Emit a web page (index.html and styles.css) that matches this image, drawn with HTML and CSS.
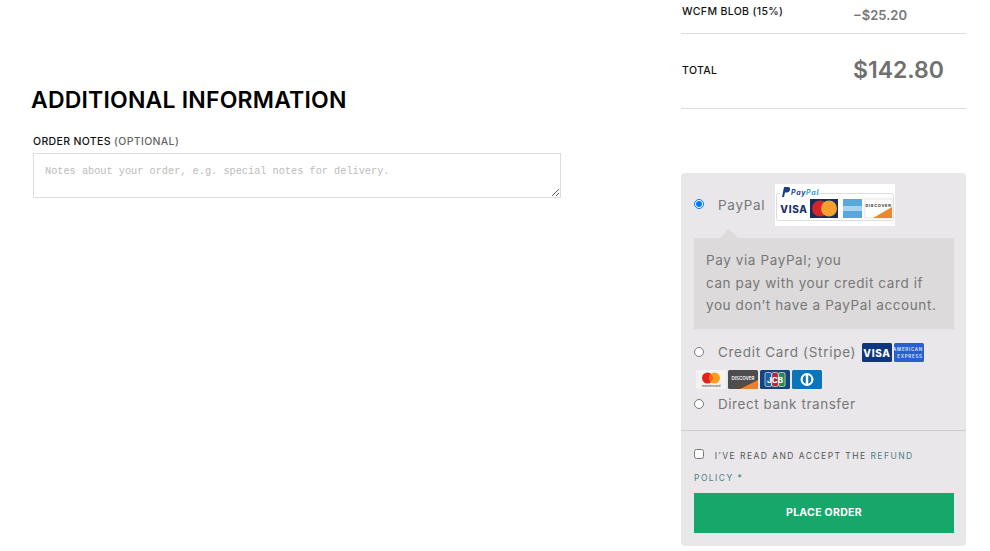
FILE: index.html
```html
<!DOCTYPE html>
<html lang="en">
<head>
    <meta charset="UTF-8">
    <meta name="viewport" content="width=device-width, initial-scale=1.0">
    <title>Checkout</title>
    <link rel="stylesheet" href="styles.css">
</head>
<body>

<div class="checkout">
    <div class="details">
        <h3>ADDITIONAL INFORMATION</h3>
        <label class="notes-label" for="notes">ORDER NOTES <span>(OPTIONAL)</span></label>
        <textarea id="notes" class="notes" placeholder="Notes about your order, e.g. special notes for delivery."></textarea>
    </div>

    <div class="review">
        <div class="row row-tax">
            <span class="row-name">WCFM BLOB (15%)</span>
            <span class="row-value">−$25.20</span>
        </div>
        <div class="row row-total">
            <span class="row-name">TOTAL</span>
            <span class="total-value">$142.80</span>
        </div>

        <div class="payment">
            <div class="method method-paypal">
                <input type="radio" name="pay" id="pay-paypal" checked>
                <label for="pay-paypal">PayPal</label>
                <svg class="paypal-mark" width="120" height="42" viewBox="0 0 120 42">
                    <rect width="120" height="42" fill="#fff"/>
                    <rect x="1.500" y="9.500" width="117" height="27" rx="2" fill="#fff" stroke="#ddd"/>
                    <rect x="5" y="3" width="38" height="11" fill="#fff"/>
                    <path d="M7 13 9 3h4c2 0 2.500 1.500 2 3-.5 2-2 2.500-4 2.500h-1L9 13z" fill="#1a3f8f"/>
                    <text x="16" y="10.500" class="pp-word">Pay<tspan fill="#2a9fdc">Pal</tspan></text>
                    <text x="19" y="29" class="pp-visa">VISA</text>
                    <rect x="35" y="15" width="28" height="19" fill="#1b2a5c"/>
                    <circle cx="45" cy="24.500" r="8" fill="#d3252a"/>
                    <circle cx="54" cy="24.500" r="8" fill="#f3a02c"/>
                    <rect x="68" y="15" width="19" height="19" fill="#5aa7dc"/>
                    <rect x="68" y="22" width="19" height="5" fill="#a9d3ee"/>
                    <rect x="90" y="15" width="27" height="19" fill="#fff" stroke="#e3e3e3"/>
                    <path d="M117 23v11H98z" fill="#ea8a2e"/>
                    <text x="103.500" y="22.500" class="pp-disc">DISCOVER</text>
                </svg>
            </div>
            <div class="method-box">
                Pay via PayPal; you<br>
                can pay with your credit card if<br>
                you don’t have a PayPal account.
            </div>

            <div class="method method-card">
                <input type="radio" name="pay" id="pay-card">
                <label for="pay-card">Credit Card (Stripe)</label>
                <svg class="card card-first" width="30" height="19" viewBox="0 0 30 19">
                    <rect width="30" height="19" rx="1.500" fill="#10357f"/>
                    <text x="15" y="13.500" class="card-visa">VISA</text>
                </svg>
                <svg class="card" width="30" height="19" viewBox="0 0 30 19">
                    <rect width="30" height="19" rx="1.500" fill="#2a5fd0"/>
                    <text x="14" y="8" class="card-amex">AMERICAN</text>
                    <text x="16" y="15" class="card-amex">EXPRESS</text>
                </svg>
            </div>
            <div class="card-row">
                <svg class="card" width="30" height="19" viewBox="0 0 30 19">
                    <rect width="30" height="19" rx="1.500" fill="#f4f2f1"/>
                    <circle cx="11.500" cy="8" r="5.500" fill="#e2231a"/>
                    <circle cx="18.500" cy="8" r="5.500" fill="#f79e1b"/>
                    <path d="M15 3.800a5.500 5.500 0 0 1 0 8.400 5.500 5.500 0 0 1 0-8.400z" fill="#f0641e"/>
                    <text x="15" y="17" class="card-mc">mastercard</text>
                </svg>
                <svg class="card" width="30" height="19" viewBox="0 0 30 19">
                    <rect width="30" height="19" rx="1.500" fill="#4d4d4f"/>
                    <path d="M30 10v7.500a1.500 1.500 0 0 1-1.500 1.500H12z" fill="#e9812e"/>
                    <text x="15" y="9.500" class="card-disc">DISCOVER</text>
                </svg>
                <svg class="card" width="30" height="19" viewBox="0 0 30 19">
                    <rect width="30" height="19" rx="1.500" fill="#13447f"/>
                    <rect x="5" y="2.500" width="6.500" height="14" rx="1.500" fill="#1c5fa8" stroke="#fff" stroke-width=".6"/>
                    <rect x="11.800" y="2.500" width="6.500" height="14" rx="1.500" fill="#b5283c" stroke="#fff" stroke-width=".6"/>
                    <rect x="18.600" y="2.500" width="6.500" height="14" rx="1.500" fill="#2b8a4a" stroke="#fff" stroke-width=".6"/>
                    <text x="15" y="12.500" class="card-jcb">JCB</text>
                </svg>
                <svg class="card" width="30" height="19" viewBox="0 0 30 19">
                    <rect width="30" height="19" rx="1.500" fill="#0a75b8"/>
                    <circle cx="15" cy="9.500" r="6.500" fill="#fff"/>
                    <path d="M13.800 5.300a4.400 4.400 0 0 0 0 8.400zM16.200 5.300v8.400a4.400 4.400 0 0 0 0-8.400z" fill="#0a75b8"/>
                </svg>
            </div>
            <div class="method method-bank">
                <input type="radio" name="pay" id="pay-bank">
                <label for="pay-bank">Direct bank transfer</label>
            </div>

            <div class="place">
                <div class="terms">
                    <input type="checkbox" id="terms">
                    <label for="terms">I’VE READ AND ACCEPT THE <a href="#">REFUND</a> <a href="#">POLICY</a> <a href="#">*</a></label>
                </div>
                <button class="btn">PLACE ORDER</button>
            </div>
        </div>
    </div>
</div>

</body>
</html>
```

FILE: styles.css
```css
body {
    font-family: "Inter", "Liberation Sans", sans-serif;
    margin: 0;
    background: #fff;
    overflow: hidden;
}
.checkout {
    display: grid;
    grid-template-columns: 681px 285px;
    height: 551px;
}
.details {
    padding: 85px 120px 0 33px;
}
h3 {
    margin: 0 0 0 -2px;
    font-size: 23px;
    line-height: 30px;
    font-weight: 600;
    letter-spacing: 0.2px;
    color: #000;
    white-space: nowrap;
}
.notes-label {
    display: block;
    margin-top: 15px;
    font-size: 10.500px;
    line-height: 23px;
    font-weight: 500;
    letter-spacing: 0.35px;
    color: #111;
}
.notes-label span {
    color: #666;
}
.notes {
    display: block;
    box-sizing: border-box;
    width: 528px;
    height: 45px;
    margin: 0;
    padding: 9px 11px;
    border: 1px solid #ddd;
    font-family: "Liberation Mono", monospace;
    font-size: 10.250px;
    line-height: 16px;
}
.notes::placeholder {
    color: #bbb;
}
.row {
    display: flex;
    box-sizing: border-box;
    border-bottom: 1px solid #ddd;
}
.row-tax {
    height: 34px;
}
.row-total {
    height: 75px;
    padding-bottom: 2px;
    align-items: center;
}
.row-name {
    width: 171px;
    padding-left: 1px;
    font-size: 10.500px;
    font-weight: 500;
    letter-spacing: 0.35px;
    color: #111;
}
.row-tax .row-name {
    padding-top: 5px;
    line-height: 14px;
}
.row-value {
    padding-top: 7px;
    line-height: 16px;
    font-size: 13px;
    font-weight: 600;
    color: #777;
}
.total-value {
    font-size: 23px;
    font-weight: 600;
    color: #707070;
}
.payment {
    box-sizing: border-box;
    height: 373px;
    margin-top: 64px;
    padding-top: 11px;
    border-radius: 4px;
    background: #e9e7ea;
}
.method {
    display: flex;
    align-items: center;
    padding-left: 13px;
    font-size: 13.500px;
    letter-spacing: 0.7px;
    color: #777;
}
.method input {
    width: 10px;
    height: 10px;
    margin: 0 14px 0 0;
}
.method-paypal input {
    margin-bottom: 2px;
}
.paypal-mark {
    margin-left: 10px;
}
.method-box {
    position: relative;
    box-sizing: border-box;
    height: 91px;
    margin: 12px 12px 13px 13px;
    padding: 11px 12px;
    background: #dcdadb;
    font-size: 13.500px;
    line-height: 22.500px;
    letter-spacing: 0.6px;
    color: #777;
    white-space: nowrap;
}
.method-box::before {
    content: "";
    position: absolute;
    top: -9px;
    left: 26px;
    border-left: 9px solid transparent;
    border-right: 9px solid transparent;
    border-bottom: 9px solid #dcdadb;
}
.card {
    display: block;
}
.card-first {
    margin-left: 6px;
}
.method-card {
    height: 20px;
}
.method-card .card + .card {
    margin-left: 2px;
}
.card-row {
    display: flex;
    gap: 2px;
    height: 19px;
    margin: 8px 0 0 15px;
}
.method-bank {
    height: 20px;
    margin-top: 5px;
    letter-spacing: 0.55px;
}
.place {
    margin-top: 16px;
    padding: 14px 12px 0 13px;
    border-top: 1px solid #cfcdd0;
}
.terms {
    height: 48px;
    font-size: 8.500px;
    line-height: 22px;
    letter-spacing: 1.450px;
    color: #555;
}
.terms input {
    width: 10px;
    height: 10px;
    margin: 0 7px 0 0;
    vertical-align: 0;
}
.terms a {
    color: #4f7f86;
    text-decoration: none;
}
.btn {
    display: block;
    width: 100%;
    height: 40px;
    padding: 0 0 2px;
    border: none;
    background-color: #17a76b;
    color: #fff;
    font-family: inherit;
    font-size: 10.500px;
    font-weight: 700;
    letter-spacing: 0.3px;
    cursor: pointer;
}
.pp-word {
    font-size: 7px;
    font-weight: 700;
    font-style: italic;
    fill: #1a3f8f;
}
.pp-visa {
    font-size: 10px;
    font-weight: 800;
    fill: #1a2f6b;
    text-anchor: middle;
}
.pp-disc {
    font-size: 4px;
    font-weight: 700;
    fill: #333;
    text-anchor: middle;
}
.card-visa, .card-amex, .card-mc, .card-disc, .card-jcb {
    text-anchor: middle;
}
.card-visa {
    font-size: 10px;
    font-weight: 800;
    fill: #fff;
}
.card-amex {
    font-size: 4.500px;
    font-weight: 600;
    fill: #dfe8fb;
}
.card-mc {
    font-size: 3.500px;
    fill: #333;
}
.card-disc {
    font-size: 4.500px;
    font-weight: 600;
    fill: #fff;
}
.card-jcb {
    font-size: 8px;
    font-weight: 700;
    fill: #fff;
}
```
